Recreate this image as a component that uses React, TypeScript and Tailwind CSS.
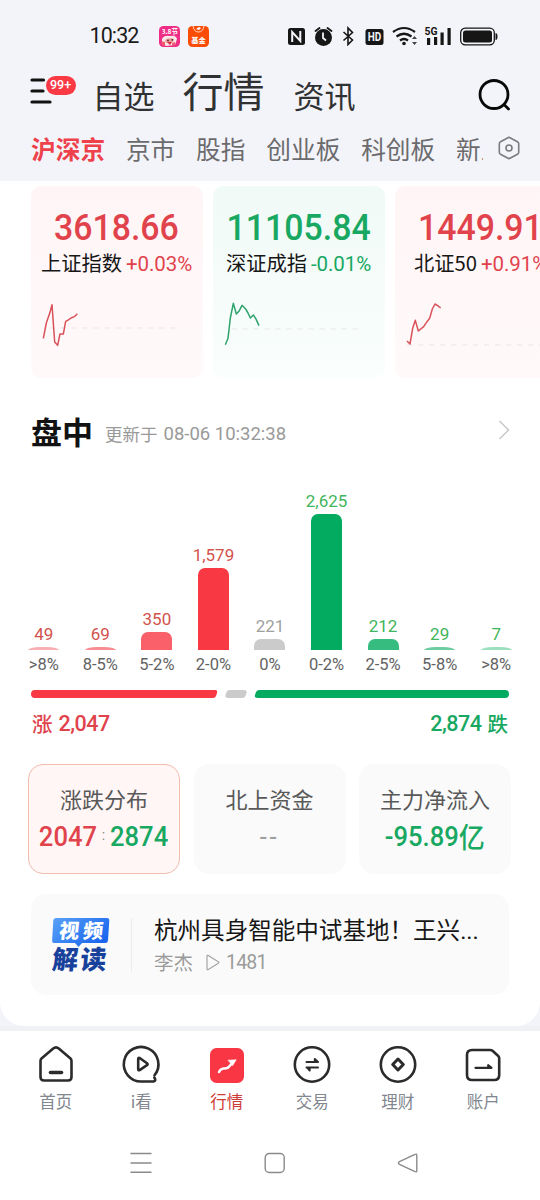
import { useState } from 'react';
import type { ReactNode } from 'react';
import clsx from 'clsx';

const channels = ['沪深京', '京市', '股指', '创业板', '科创板', '新三板'];

const indices = [
  {
    name: '上证指数',
    value: '3618.66',
    change: '+0.03%',
    up: true,
    line: '39,136 48,90 59,58 65,35 73,147 82,157 89,123 99,123 106,85 112,82 122,75 132,71 141,62',
    base: { x1: 57, x2: 445, y: 105 },
  },
  {
    name: '深证成指',
    value: '11105.84',
    change: '-0.01%',
    up: false,
    line: '39,155 47,136 54,75 63,31 72,63 81,53 89,37 100,48 107,60 114,75 123,66 130,76 140,98',
    base: { x1: 57, x2: 445, y: 108 },
  },
  {
    name: '北证50',
    value: '1449.91',
    change: '+0.91%',
    up: true,
    line: '38,144 47,153 55,106 63,82 72,114 88,101 98,86 106,76 114,48 122,33 130,38 139,45',
    base: { x1: 38, x2: 480, y: 156 },
  },
];

const distribution = [
  { range: '>8%', count: '49', height: 3.5, bar: 'bg-[#f9b0b5]', text: 'text-[#d2524c]' },
  { range: '8-5%', count: '69', height: 3.5, bar: 'bg-[#f88c93]', text: 'text-[#d2524c]' },
  { range: '5-2%', count: '350', height: 18, bar: 'bg-[#f9606a]', text: 'text-[#d2524c]' },
  { range: '2-0%', count: '1,579', height: 82, bar: 'bg-[#f83842]', text: 'text-[#d2524c]' },
  { range: '0%', count: '221', height: 11, bar: 'bg-[#cbcbcb]', text: 'text-[#a0a0a0]' },
  { range: '0-2%', count: '2,625', height: 136.5, bar: 'bg-[#02ab5f]', text: 'text-[#3fb55c]' },
  { range: '2-5%', count: '212', height: 11, bar: 'bg-[#37bc7f]', text: 'text-[#3fb55c]' },
  { range: '5-8%', count: '29', height: 3.5, bar: 'bg-[#6dcca0]', text: 'text-[#3fb55c]' },
  { range: '>8%', count: '7', height: 3.5, bar: 'bg-[#9cdfbf]', text: 'text-[#3fb55c]' },
];

function StatusBar() {
  return (
    <div className="flex h-[72px] items-center pl-[89.500px]">
      <span className="w-[69.500px] font-[Roboto] text-[21.500px] leading-none tracking-[-0.900px] text-[#1a1a1a]">10:32</span>
      <svg className="h-[21px] w-[21px]" viewBox="0 0 21 21">
        <rect width="21" height="21" rx="4.5" fill="#ef2d86" />
        <path d="M3 13q2-4 8-3 6-1 7 3l-2 6-9 1-4-3z" fill="#fbe6e8" />
        <path d="M6 14q4-3 9-1l-1 3-7 1z" fill="#e89a98" />
        <path d="M8 16h5l-2 3z" fill="#d7263d" />
        <path d="M2 15l4 1v4l-3-1zM13 17l3-1v3l-3 1z" fill="#f05a6f" />
        <circle cx="9" cy="14.4" r=".9" fill="#5b2230" />
        <circle cx="13.3" cy="13.8" r=".9" fill="#5b2230" />
        <text x="10.8" y="8" fontSize="6.5" fontWeight="700" textAnchor="middle" fill="#fff" fontFamily="Noto Sans CJK SC">3.8节</text>
      </svg>
      <svg className="ml-[8px] h-[21px] w-[21px]" viewBox="0 0 21 21">
        <rect width="21" height="21" rx="4.5" fill="#fb4c05" />
        <path d="M5 0q1 6 5.500 6T16 0" fill="none" stroke="#ffd9c6" strokeWidth="1" />
        <path d="M8 3l3-2 2 1-2 2z" fill="#fff" />
        <text x="10.500" y="16.500" fontSize="7.300" fontWeight="700" textAnchor="middle" fill="#fff" fontFamily="Noto Sans CJK SC">基金</text>
      </svg>
      <svg className="ml-[79px] h-[20px] w-[210px]" viewBox="0.500 -0.500 210 20" fill="#161616">
        <rect x="0.500" y="1.500" width="17" height="17" rx="2.500" />
        <path d="M4.700 15.500V5.500L12.800 14.500V4.500" fill="none" stroke="#f3f4f9" strokeWidth="2" />
        <circle cx="36" cy="11" r="8.500" />
        <path d="M28 4.500l4-3M44 4.500l-4-3" stroke="#161616" strokeWidth="1.800" strokeLinecap="round" />
        <path d="M35.500 6v5.500l3 2.500" fill="none" stroke="#f3f4f9" strokeWidth="1.800" />
        <path d="M56 5.500l9 8-4.500 4.500V1.500l4.500 4.500-9 8" fill="none" stroke="#161616" strokeWidth="1.600" />
        <rect x="78" y="2.500" width="18" height="16" rx="2.500" />
        <text x="87" y="14.800" textAnchor="middle" fontFamily="Roboto" fontSize="12" fontWeight="700" fill="#f3f4f9" textLength="13.500" lengthAdjust="spacingAndGlyphs">HD</text>
        <g fill="none" stroke="#161616" strokeWidth="2.200">
          <path d="M105.500 5.500q11-8 22 0" />
          <path d="M109 10q7.500-5.500 15 0" />
          <path d="M112.500 14q4-3 8 0" />
        </g>
        <circle cx="116.500" cy="17" r="1.800" />
        <path d="M124.500 12.500l2.500-3 2.500 3zM124.500 15.500l2.500 3 2.500-3z" fill="#444" />
        <text x="137" y="8.800" fontFamily="Roboto" fontSize="10.500" fontWeight="700" textLength="13" lengthAdjust="spacingAndGlyphs">5G</text>
        <path d="M139.500 11.500h3.200v7h-3.200zM146.500 10.500h3.200v8h-3.200zM153 6h3.200v12.500H153zM160 1.500h3.200v17H160z" />
        <rect x="173.200" y="1.700" width="33.600" height="16.600" rx="4.500" fill="none" stroke="#161616" strokeWidth="1.300" />
        <rect x="175.500" y="4" width="29" height="12" rx="2.500" />
        <path d="M208 6.500q2 0 2 3.500t-2 3.500z" />
      </svg>
    </div>
  );
}

function Header() {
  return (
    <div className="flex h-[50px] items-center pb-[6px] pl-[30px] text-[#303133]">
      <div className="relative mb-[10px] h-[26px] w-[62.500px]">
        <svg className="mt-[2px] h-7 w-[22px]" viewBox="0 0 22 28" fill="none" stroke="#111" strokeWidth="3.200" strokeLinecap="round">
          <path d="M2 2h11.500M2 13h11M2 24h18" />
        </svg>
        <span className="absolute top-0 left-[15.500px] flex h-[19px] w-[30px] items-center justify-center rounded-full bg-[#f93a45] font-[Roboto] text-[12.500px] leading-none font-medium text-white">
          99+
        </span>
      </div>
      <span className="text-[31px] leading-none">自选</span>
      <span className="mb-[9px] ml-[28px] text-[41px] leading-none">行情</span>
      <span className="ml-[29px] text-[31px] leading-none">资讯</span>
      <svg className="mt-[2px] ml-auto mr-[29px] h-[33px] w-[33px]" viewBox="0 0 33 33" fill="none" stroke="#080808" strokeWidth="2.800" strokeLinecap="round">
        <circle cx="16" cy="15.500" r="14" />
        <path d="M26 25.500l4.500 4.500" />
      </svg>
    </div>
  );
}

function ChannelTabs() {
  const [active, setActive] = useState('沪深京');
  return (
    <div className="flex h-[59px] items-center pb-[7px] pl-[31px]">
      <div className="flex w-[452px] gap-[20.800px] overflow-hidden">
        {channels.map((c) => (
          <button
            key={c}
            onClick={() => setActive(c)}
            className={clsx(
              'shrink-0 text-[24.700px] leading-[36px] whitespace-nowrap',
              active === c ? 'font-bold text-[#ee414b]' : 'text-[#6b6b6d]'
            )}
          >
            {c}
          </button>
        ))}
      </div>
      <svg className="ml-[14.500px] h-6 w-[22px]" viewBox="0 0 22 24" fill="none" stroke="#7b7b7d" strokeWidth="1.600">
        <path d="M11 1.300l8.500 4.500q1.200.7 1.200 2v8.400q0 1.300-1.200 2L11 22.700l-8.500-4.500q-1.200-.7-1.200-2V7.800q0-1.300 1.200-2z" strokeLinejoin="round" />
        <circle cx="11" cy="12" r="3" />
      </svg>
    </div>
  );
}

function IndexCard({ item }: { item: (typeof indices)[number] }) {
  const color = item.up ? 'text-[#e1434c]' : 'text-[#18a862]';
  return (
    <div
      className={clsx(
        'flex h-[192px] w-[172px] shrink-0 flex-col items-center rounded-[10px] pt-[24px] bg-linear-to-b',
        item.up ? 'from-[#fff5f6] to-[#fff9f9]' : 'from-[#f0faf6] to-[#fafefd]'
      )}
    >
      <div className={clsx('scale-x-[0.94] font-[Roboto] text-[36px] leading-[36px] font-medium', color)}>{item.value}</div>
      <div className="mt-[8px] flex h-5 items-center gap-1 whitespace-nowrap">
        <span className="mb-[3px] text-[20.300px] leading-none text-[#161616]">{item.name}</span>
        <span className={clsx('font-[Roboto] text-[20.500px] leading-none font-[450] tracking-[-0.100px]', color)}>{item.change}</span>
      </div>
      <svg className="mt-[19px] h-[60px] w-[172px] shrink-0" viewBox="2 0 516 180" fill="none">
        <line x1={item.base.x1} x2={item.base.x2} y1={item.base.y} y2={item.base.y} stroke="#e9e7e7" strokeWidth="3" strokeDasharray="16 17" />
        <polyline points={item.line} stroke={item.up ? '#d9525a' : '#2fa36c'} strokeWidth="4.500" strokeLinejoin="round" />
      </svg>
    </div>
  );
}

function Distribution() {
  return (
    <>
      <div className="grid grid-cols-9 px-[15.500px]">
        {distribution.map((d) => (
          <div key={d.range + d.count} className="flex h-[198px] flex-col items-center justify-end font-[Roboto]">
            <span className={clsx('mb-1 text-[17px] leading-[17px]', d.text)}>{d.count}</span>
            <div
              className={clsx('w-[31px]', d.height < 8 ? 'rounded-t-[16px_4px]' : 'rounded-t-[7px]', d.bar)}
              style={{ height: d.height }}
            />
            <span className="mt-[6px] text-[16.500px] leading-[18px] whitespace-nowrap text-[#636363]">{d.range}</span>
          </div>
        ))}
      </div>
      <svg className="mt-4 ml-[31px] h-2 w-[478px]" viewBox="0 0 478 8">
        <path d="M4 0H184q3 0 2 3l-1 3q-.6 2-3 2H4a4 4 0 010-8z" fill="#f83842" />
        <path d="M198.500 0h14q4 0 3 3l-1 3q-.8 2-3 2h-14q-4 0-3-3l1-3q.8-2 3-2z" fill="#cbcbcb" />
        <path d="M228.500 0H474a4 4 0 010 8H227q-4 0-3-3l1-3q.8-2 3.500-2z" fill="#02ab5f" />
      </svg>
      <div className="mt-[14px] flex h-6 items-center justify-between px-8 text-[20.500px] leading-none font-medium">
        <span className="flex items-center gap-[6px] text-[#e1434c]">
          <span className="mb-[2px]">涨</span>
          <span className="font-[Roboto] text-[21.500px] leading-none tracking-[-0.500px]">2,047</span>
        </span>
        <span className="flex items-center gap-[6px] text-[#18a862]">
          <span className="font-[Roboto] text-[21.500px] leading-none tracking-[-0.500px]">2,874</span>
          <span className="mb-[2px]">跌</span>
        </span>
      </div>
    </>
  );
}

function StatTile({ title, active, children }: { title: string; active?: boolean; children: ReactNode }) {
  return (
    <div
      className={clsx(
        'flex h-[110px] w-[152px] flex-col items-center rounded-[15px] border pt-[22px]',
        active ? 'border-[#efbcae] bg-[#fff6f5]' : 'border-[#fafafa] bg-[#fafafa]'
      )}
    >
      <div className="text-[22px] leading-[22px] text-[#595959]">{title}</div>
      <div className="mt-[14px] flex h-[28px] scale-x-[0.93] items-center font-[Roboto] text-[27.500px] leading-none font-medium whitespace-nowrap">
        {children}
      </div>
    </div>
  );
}

function VideoCard() {
  return (
    <div className="mt-[20px] ml-[30.500px] flex h-[101px] w-[478px] items-center rounded-[15px] bg-[#fafafa] pl-[21.500px]">
      <svg className="h-[54px] w-[58px]" viewBox="0 0 58 54">
        <defs>
          <linearGradient id="bubble" x1="0" y1="0" x2="1" y2="0.600">
            <stop offset="0" stopColor="#5aa2f7" />
            <stop offset="1" stopColor="#1b66ee" />
          </linearGradient>
        </defs>
        <path d="M4 0H55q2.500 0 2.300 2.500L56 22.500q-.2 2.500-2.700 2.500H30l-3.500 4-3.500-4H2Q0 25 .1 22.500L1.300 2.500Q1.500 0 4 0z" fill="url(#bubble)" />
        <g fontFamily="Noto Sans CJK SC" fontWeight="900" transform="skewX(-6)">
          <text x="8.500" y="19.800" fontSize="20" letterSpacing="4" fill="#fff">视频</text>
          <text x="4.500" y="51" fontSize="26" letterSpacing="2.500" fill="#17419a">解读</text>
        </g>
      </svg>
      <div className="ml-[21px] h-[54px] w-px bg-[#ececec]" />
      <div className="ml-[22px]">
        <div className="text-[23.550px] leading-6 whitespace-nowrap text-[#161616]">
          杭州具身智能中试基地！王兴<span className="font-[Roboto]">...</span>
        </div>
        <div className="mt-[10px] flex h-5 items-center text-[19.500px] leading-none text-[#9b9b9b]">
          <span className="mb-[2px]">李杰</span>
          <svg className="ml-[13px] h-[17px] w-[14px]" viewBox="0 0 14 17" fill="none" stroke="#a5a5a5" strokeWidth="1.200" strokeLinejoin="round">
            <path d="M1 2.200q0-1.500 1.300-.7L12.300 7.700q1 .8 0 1.600L2.300 15.500Q1 16.300 1 14.800z" />
          </svg>
          <span className="ml-[6px] font-[Roboto] text-[19.500px] leading-none tracking-[-0.800px]">1481</span>
        </div>
      </div>
    </div>
  );
}

const navItems = [
  {
    label: '首页',
    icon: (
      <>
        <path d="M16.200 3.600Q19 1.200 21.800 3.600L33.500 13.500Q34.500 14.400 34.500 16V32q0 3.500-3.500 3.500H7Q3.500 35.500 3.500 32V16q0-1.600 1-2.500z" />
        <path d="M13.500 27.500h11" strokeWidth="3.600" />
      </>
    ),
  },
  {
    label: 'i看',
    icon: (
      <>
        <path d="M32.500 30.200A17.300 17.300 0 1 0 20 36.500H31.500Q34.500 36 32.300 32.500" />
        <path d="M16.200 14v10q0 2 1.800.9l7-4.700q1.300-1 0-2l-7-5q-1.800-1-1.800.8z" />
      </>
    ),
  },
  {
    label: '行情',
    icon: (
      <>
        <rect x="2" y="3" width="34" height="35" rx="6.500" fill="#f93643" stroke="none" />
        <path d="M11 27q1.500-3.200 4.500-3.500 4.500.3 6-2.300l3.200-4.200" stroke="#fff" strokeWidth="2.500" />
        <path d="M20.300 15.200l7.900-.4-3.500 5.700z" fill="#fff" stroke="#fff" strokeWidth="0.600" />
      </>
    ),
  },
  {
    label: '交易',
    icon: (
      <>
        <circle cx="19" cy="19.500" r="17.200" />
        <path d="M13.500 17h11.500l-3.200-3v3M25 22.500H13.500M16.700 22.500v3l-2.500-3" strokeWidth="2" />
      </>
    ),
  },
  {
    label: '理财',
    icon: (
      <>
        <circle cx="19" cy="19.500" r="17.200" />
        <path d="M19 14l5.300 5.500-5.300 5.500-5.300-5.500z" strokeWidth="3" />
      </>
    ),
  },
  {
    label: '账户',
    icon: (
      <>
        <path d="M8 5H26q1.500 0 2.500.8l5.500 5q1.200 1 1.200 2.500V30q0 5-5 5H8q-5 0-5-5V10q0-5 5-5z" />
        <path d="M11.500 22.800h16l-3.200-2.500v2.500" strokeWidth="2.300" />
      </>
    ),
  },
];

function BottomNav() {
  return (
    <nav className="grid h-[95px] grid-cols-6 bg-white pr-[14px] pl-[13px] pt-[14px]">
      {navItems.map((item) => (
        <a key={item.label} className="flex flex-col items-center">
          <svg className="h-[39px] w-[38px] overflow-visible" viewBox="0 0 38 39" fill="none" stroke="#2b2b2b" strokeWidth="2.600" strokeLinecap="round" strokeLinejoin="round">
            {item.icon}
          </svg>
          <span className={clsx('mt-[8px] text-[16.500px] leading-[18px]', item.label === '行情' ? 'text-[#cf3c38]' : 'text-[#82868e]')}>
            {item.label}
          </span>
        </a>
      ))}
    </nav>
  );
}

export default function App() {
  return (
    <div className="flex h-[1200px] w-[540px] flex-col overflow-hidden bg-[#f3f4f9] font-['Noto_Sans_CJK_SC',sans-serif]">
      <StatusBar />
      <Header />
      <ChannelTabs />

      <main className="h-[845px] shrink-0 rounded-b-[24px] bg-white">
        <div className="flex gap-[10px] overflow-hidden pt-[5px] pl-[30.500px]">
          {indices.map((item) => (
            <IndexCard key={item.name} item={item} />
          ))}
        </div>

        {/* 盘中 */}
        <div className="mt-[36px] flex h-9 items-center pr-[30px] pl-[31px]">
          <h2 className="mb-[3px] text-[31px] leading-none font-bold text-[#121212]">盘中</h2>
          <span className="mt-[5px] ml-3 flex items-center text-[17.500px] leading-none text-[#999]">
            <span className="mb-[2px]">更新于</span>
            <span className="ml-[6px] font-[Roboto] text-[18.500px] leading-none">08-06 10:32:38</span>
          </span>
          <svg className="mb-[5px] ml-auto h-5 w-3" viewBox="0 0 12 20" fill="none" stroke="#c8c8c8" strokeWidth="1.500">
            <path d="M1.500 1l9 9-9 9" />
          </svg>
        </div>
        <div className="mt-[26px]">
          <Distribution />
        </div>

        <div className="mt-7 ml-[28px] flex gap-[13.500px]">
          <StatTile title="涨跌分布" active>
            <span className="text-[#e1434c]">2047</span>
            <span className="w-[14px] pb-1 text-center text-[15px] leading-none font-normal text-[#888]">:</span>
            <span className="text-[#18a862]">2874</span>
          </StatTile>
          <StatTile title="北上资金">
            <span className="font-normal tracking-[3px] text-[#a0a0a0]">--</span>
          </StatTile>
          <StatTile title="主力净流入">
            <span className="text-[#18a862]">-95.89</span>
            <span className="mb-[3px] font-['Noto_Sans_CJK_SC'] text-[28px] leading-none text-[#18a862]">亿</span>
          </StatTile>
        </div>

        <VideoCard />
      </main>

      <div className="h-[5px] shrink-0 bg-[#f0f1f5]" />
      <BottomNav />

      {/* 系统导航键 */}
      <div className="flex flex-1 items-center bg-white pl-[130px]">
        <svg className="h-[22px] w-[290px]" viewBox="0 0 290 22" fill="none" stroke="#8a8a8a" strokeWidth="1.400">
          <path d="M.500 1.500h21M.500 11h21M.500 20.300h21" />
          <rect x="135.200" y="1.500" width="19" height="19" rx="4" />
          <path d="M285 2.500q1.800-1 1.800.8V18.700q0 1.800-1.800.8L269.500 12.300q-2.200-1.300 0-2.600z" />
        </svg>
      </div>
    </div>
  );
}
